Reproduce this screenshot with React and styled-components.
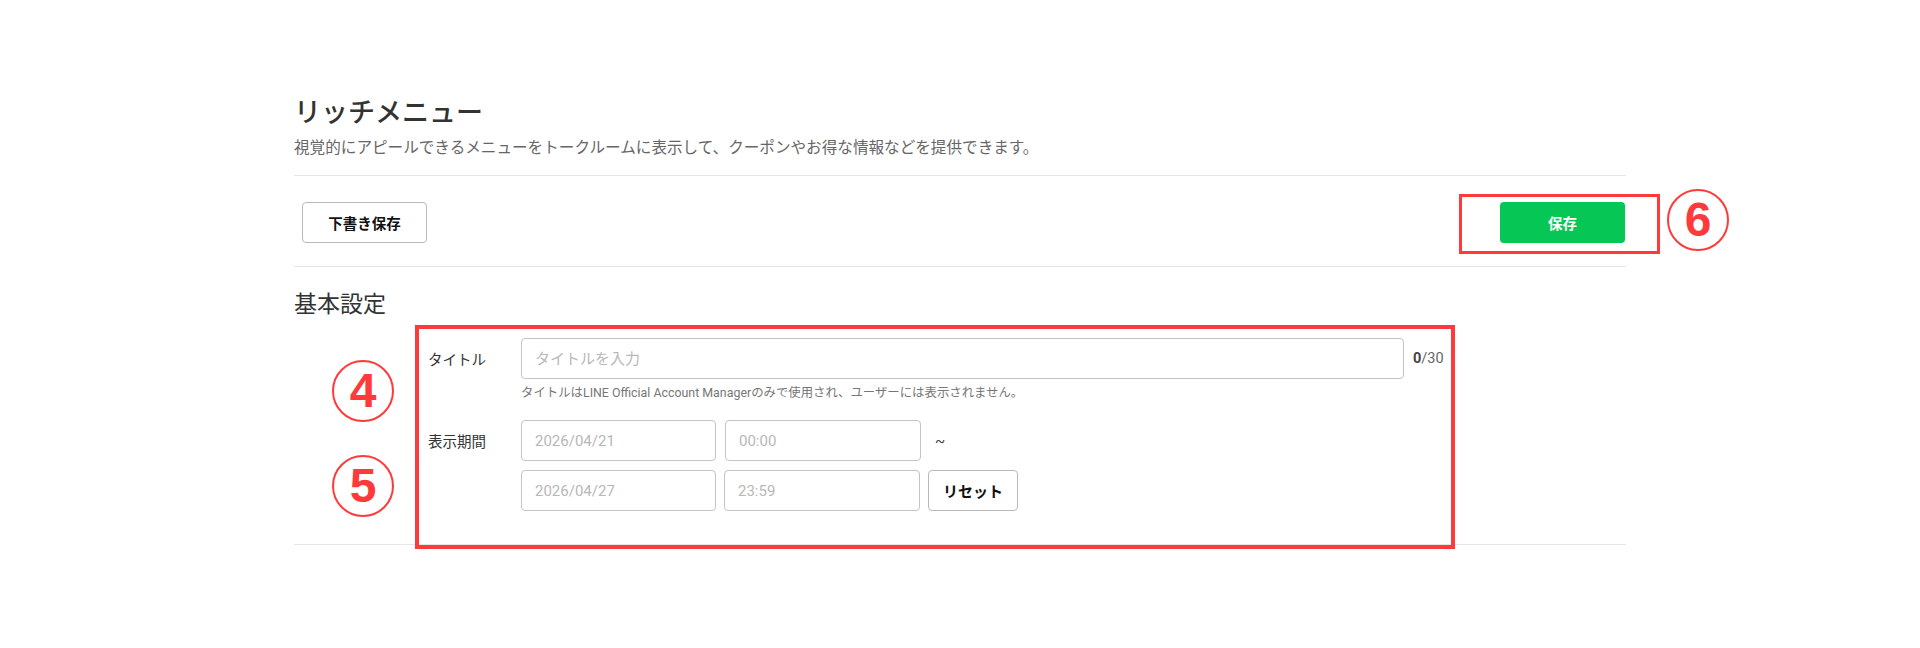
import styled, { createGlobalStyle } from "styled-components";

const GlobalStyle = createGlobalStyle`
  body {
    margin: 0;
    background: #ffffff;
    font-family: Roboto, "Noto Sans CJK JP", sans-serif;
    color: #333;
  }
`;

export default function App() {
  return (
    <>
      <GlobalStyle />
      <Page>
        <Header>
          <Title>リッチメニュー</Title>
          <Lead>
            視覚的にアピールできるメニューをトークルームに表示して、クーポンやお得な情報などを提供できます。
          </Lead>
        </Header>

        <Toolbar>
          <GhostButton type="button">下書き保存</GhostButton>
          <SaveWrap>
            <SaveButton type="button">保存</SaveButton>
            <SaveMark />
            <Badge $left="167px" $top="-13px">6</Badge>
          </SaveWrap>
        </Toolbar>

        <Section>
          <SectionTitle>基本設定</SectionTitle>
          <Form>
            <FormMark />
            <Badge $left="-96px" $top="22px">4</Badge>
            <Badge $left="-96px" $top="117px">5</Badge>

            <Row>
              <Label>タイトル</Label>
              <Field>
                <InputLine>
                  <TextInput placeholder="タイトルを入力" $width="883px" />
                  <Counter>
                    <b>0</b>/30
                  </Counter>
                </InputLine>
                <Hint>
                  タイトルはLINE Official Account Managerのみで使用され、ユーザーには表示されません。
                </Hint>
              </Field>
            </Row>

            <Row $gap="18px">
              <Label>表示期間</Label>
              <Field>
                <InputLine>
                  <TextInput placeholder="2026/04/21" $width="195px" />
                  <TextInput placeholder="00:00" $width="196px" />
                  <Tilde>~</Tilde>
                </InputLine>
                <InputLine $gap="8px">
                  <TextInput placeholder="2026/04/27" $width="195px" />
                  <TextInput placeholder="23:59" $width="196px" />
                  <ResetButton type="button">リセット</ResetButton>
                </InputLine>
              </Field>
            </Row>
          </Form>
        </Section>
      </Page>
    </>
  );
}

const Page = styled.main`
  width: 1332px;
  margin: 0 auto;
  padding: 95px 0 80px;
`;

const Header = styled.header`
  padding-bottom: 16px;
  border-bottom: 1px solid #e6e6e6;
`;

const Title = styled.h1`
  margin: 0;
  font-size: 27px;
  line-height: 36px;
  font-weight: 500;
  color: #333;
`;

const Lead = styled.p`
  margin: 6px 0 0;
  font-size: 15.6px;
  line-height: 22px;
  color: #666;
`;

const Toolbar = styled.div`
  display: flex;
  justify-content: space-between;
  align-items: center;
  padding: 26px 1px 23px 8px;
  border-bottom: 1px solid #e6e6e6;
`;

const BaseButton = styled.button`
  height: 41px;
  border-radius: 4px;
  font-family: inherit;
  font-size: 14.5px;
  font-weight: 700;
  cursor: pointer;
`;

const GhostButton = styled(BaseButton)`
  width: 125px;
  background: #fff;
  border: 1px solid #b9b9b9;
  color: #111;
`;

const SaveWrap = styled.div`
  position: relative;
`;

const SaveButton = styled(BaseButton)`
  width: 125px;
  background: #06c755;
  border: none;
  color: #fff;
`;

const SaveMark = styled.div`
  position: absolute;
  left: -41px;
  top: -8px;
  width: 201px;
  height: 60px;
  box-sizing: border-box;
  border: 3px solid #ff3a3a;
  pointer-events: none;
`;

const Badge = styled.div`
  position: absolute;
  left: ${(p) => p.$left};
  top: ${(p) => p.$top};
  width: 62px;
  height: 62px;
  box-sizing: border-box;
  border: 2px solid #ff3a3a;
  border-radius: 50%;
  display: flex;
  align-items: center;
  justify-content: center;
  color: #ff3a3a;
  font-family: "Liberation Sans", Arial, sans-serif;
  font-size: 48px;
  font-weight: 700;
  line-height: 1;
`;

const Section = styled.section`
  padding: 22px 0 33px;
  border-bottom: 1px solid #e6e6e6;
`;

const SectionTitle = styled.h2`
  margin: 0;
  font-size: 23px;
  line-height: 32px;
  font-weight: 400;
  color: #333;
`;

const Form = styled.div`
  position: relative;
  margin: 17px 0 0 134px;
  display: flex;
  flex-direction: column;
`;

const FormMark = styled.div`
  position: absolute;
  left: -13px;
  top: -13px;
  width: 1040px;
  height: 224px;
  box-sizing: border-box;
  border: 4px solid #ff3a3a;
  pointer-events: none;
`;

const Row = styled.div`
  display: grid;
  grid-template-columns: 93px 1fr;
  margin-top: ${(p) => p.$gap || "0"};
`;

const Label = styled.div`
  padding-top: 3px;
  font-size: 14.5px;
  line-height: 40px;
  color: #333;
`;

const Field = styled.div`
  display: flex;
  flex-direction: column;
  gap: 9px;
`;

const InputLine = styled.div`
  display: flex;
  align-items: center;
  gap: ${(p) => p.$gap || "9px"};
`;

const TextInput = styled.input`
  width: ${(p) => p.$width};
  height: 41px;
  box-sizing: border-box;
  padding: 0 13px;
  border: 1px solid #c4c4c4;
  border-radius: 4px;
  font-family: inherit;
  font-size: 15px;
  color: #333;
  outline: none;

  &::placeholder {
    color: #b8b8b8;
  }
`;

const Counter = styled.span`
  font-size: 14.5px;
  color: #666;

  b {
    color: #444;
    font-weight: 700;
  }
`;

const Hint = styled.p`
  margin: -4px 0 0;
  font-size: 12.4px;
  line-height: 18px;
  color: #777;
`;

const Tilde = styled.span`
  margin-left: 5px;
  font-size: 15px;
  color: #444;
`;

const ResetButton = styled(BaseButton)`
  width: 90px;
  background: #fff;
  border: 1px solid #b9b9b9;
  color: #111;
  font-size: 15px;
`;
